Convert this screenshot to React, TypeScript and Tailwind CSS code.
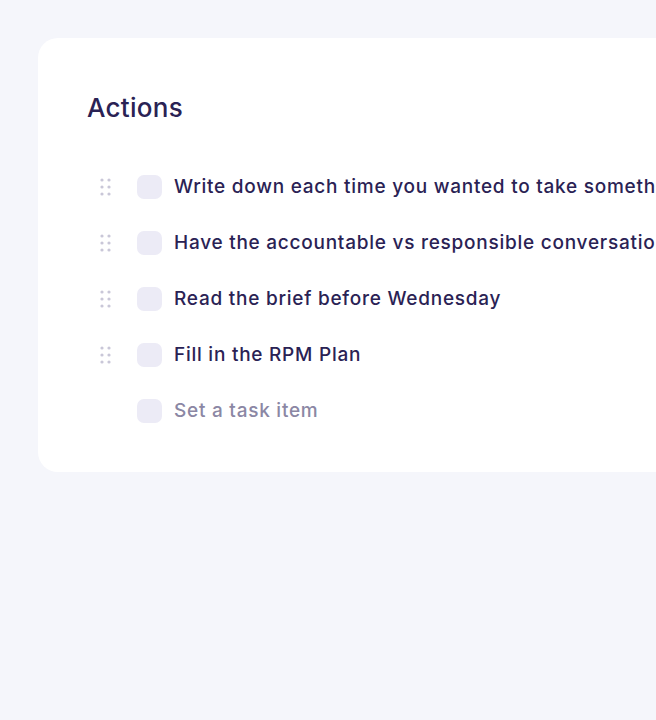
import type { ReactNode } from "react";

const tasks = [
	"Write down each time you wanted to take something on yourself",
	"Have the accountable vs responsible conversation with the team",
	"Read the brief before Wednesday",
	"Fill in the RPM Plan",
];

function DragHandle() {
	return (
		<svg width="12" height="18" viewBox="0 0 12 18" className="shrink-0">
			{[2, 9, 16].map((y) =>
				[2, 9].map((x) => (
					<circle key={`${x}-${y}`} cx={x} cy={y} r="1.6" fill="#c9c7d8" />
				)),
			)}
		</svg>
	);
}

function TaskRow({
	handle,
	children,
}: {
	handle: boolean;
	children: ReactNode;
}) {
	return (
		<div className="flex h-[56px] items-center">
			<div className="flex w-[49px] shrink-0 items-center ps-[12px]">
				{handle ? <DragHandle /> : null}
			</div>
			<div className="h-[24px] w-[25px] shrink-0 rounded-[7px] bg-[#ecebf6]" />
			<div className="ms-[12px] whitespace-nowrap text-[19px] font-medium tracking-[0.75px]">
				{children}
			</div>
		</div>
	);
}

export default function App() {
	return (
		<div
			className="min-h-[720px] w-[656px] overflow-hidden bg-[#f5f6fb] pt-[38px] text-[#2a2254]"
			style={{ fontFamily: "Inter, 'Noto Sans', sans-serif" }}
		>
			<div className="ms-[38px] w-[760px] rounded-[20px] bg-white pt-[52px] pb-[33px] ps-[49px]">
				<h2 className="text-[26px] leading-[36px] font-medium tracking-[0.3px]">Actions</h2>
				<div className="mt-[33px] -ms-[49px] ps-[50px] flex flex-col">
					{tasks.map((t) => (
						<TaskRow key={t} handle>
							{t}
						</TaskRow>
					))}
					<TaskRow handle={false}>
						<span className="text-[#8b87a4]">Set a task item</span>
					</TaskRow>
				</div>
			</div>
		</div>
	);
}
